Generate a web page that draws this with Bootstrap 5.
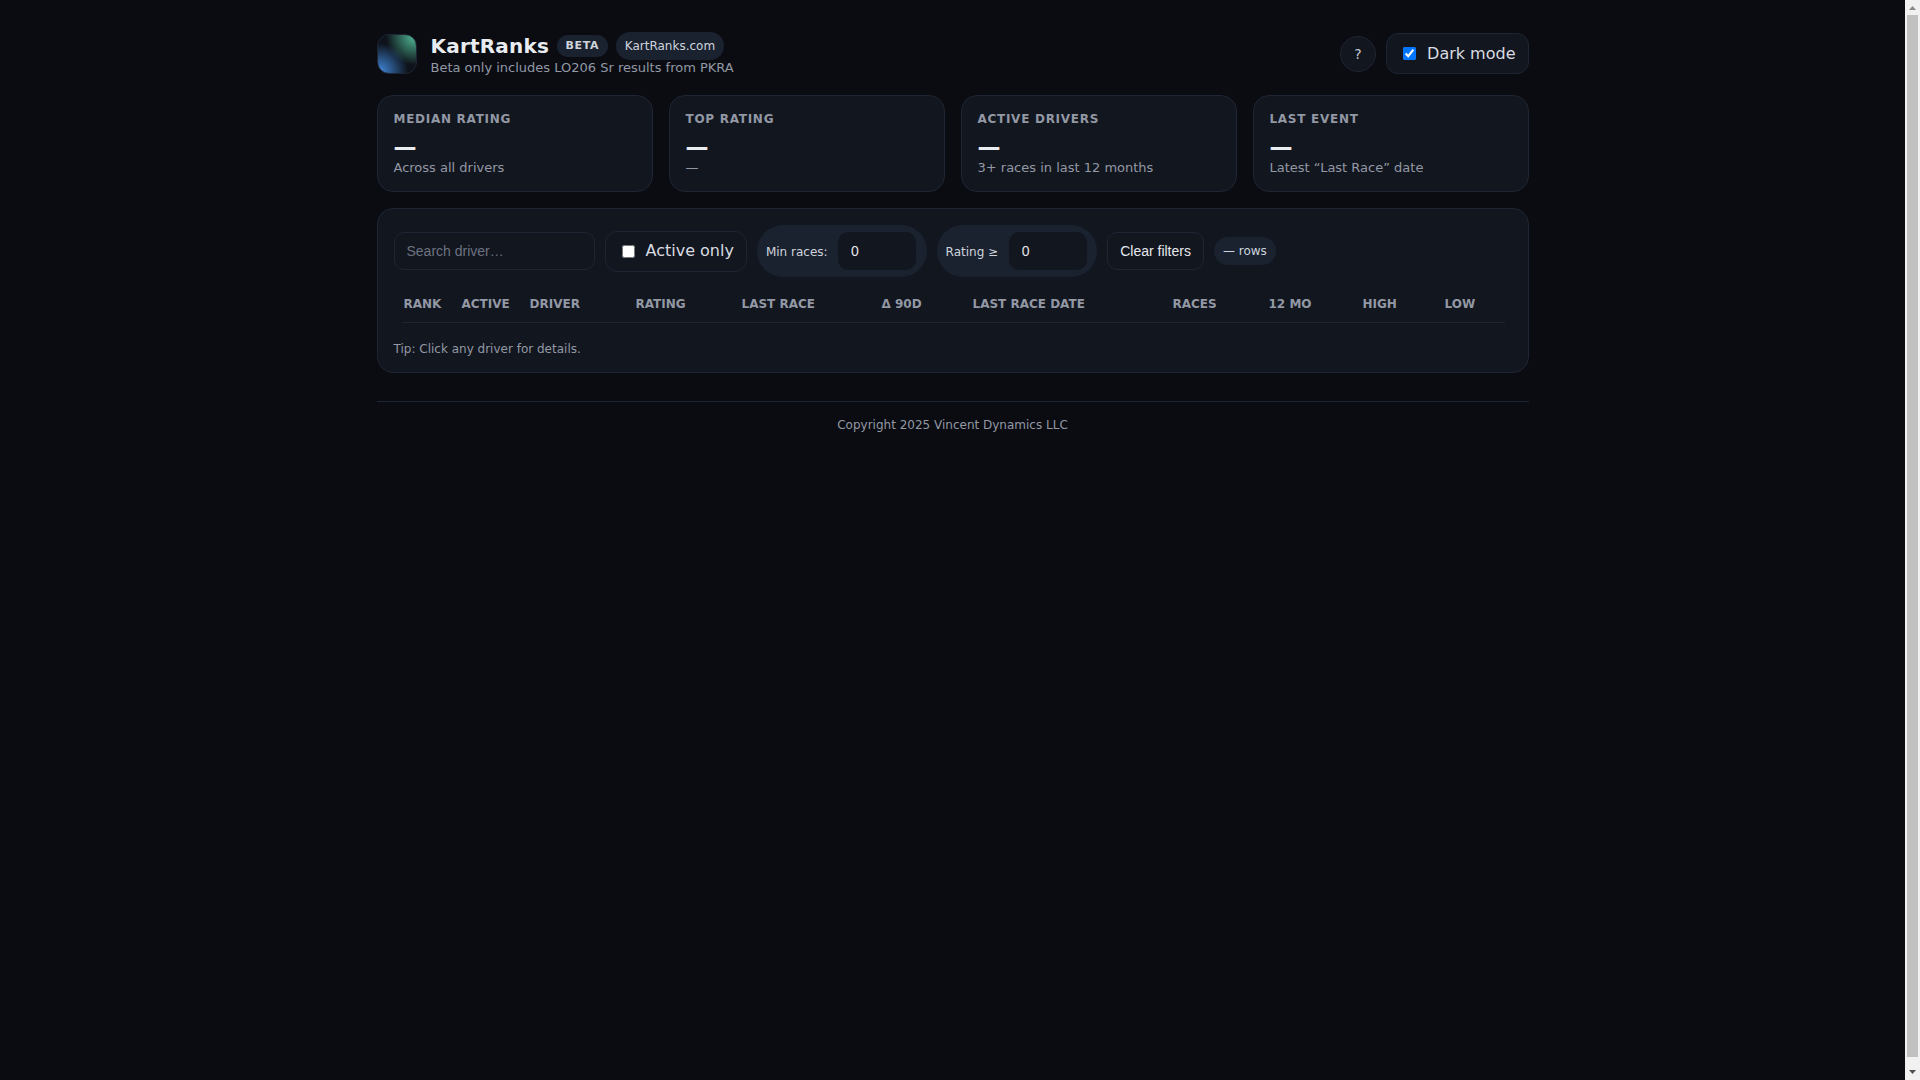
<!DOCTYPE html>
<html lang="en">
<head>
<meta charset="utf-8">
<title>KartRanks</title>
<link href="https://cdn.jsdelivr.net/npm/bootstrap@5.3.0/dist/css/bootstrap.min.css" rel="stylesheet">
<style>
html, body { height: 100%; overflow: hidden; }
body { background: #0a0c12; color: #e6e8ec; font-family: "DejaVu Sans", sans-serif; }
.kr-page { flex: 1 1 0; min-width: 0; }
.kr-sbar { width: 15px; flex: none; height: 100vh; background: #f1f1f1; }
.kr-sbar-btn { height: 15px; flex: none; }
.kr-sbar-btn svg { display: block; }
.kr-sbar-thumb { height: 1042px; margin: 0 2px; background: #c1c1c1; flex: none; }
.kr-sbar-rest { flex: 1 1 0; }
.kr-wrap { width: 1200px; margin: 0 auto; padding: 32px 24px 0; }
.kr-head { height: 43px; margin-bottom: 20px; }
.kr-logo { width: 40px; height: 40px; border-radius: 12px; border: 1px solid #1e2533; flex: none;
  background: radial-gradient(circle at 95% 5%, #4fb592 0, rgba(79,181,146,0) 55%), radial-gradient(circle at 5% 95%, #3f86d8 0, rgba(63,134,216,0) 55%), #0e121a; }
.kr-brand { margin-left: 14px; }
.kr-title { font-size: 20px; letter-spacing: .01em; font-weight: 700; line-height: 28px; color: #e9ecf0; }
.kr-beta { font-size: 11px; font-weight: 700; letter-spacing: .06em; height: 22px; line-height: 22px; padding: 0 8.5px; border-radius: 999px; background: #1a2230; color: #cfd4dc; margin-left: 8px; }
.kr-site { font-size: 12px; height: 28px; line-height: 28px; padding: 0 9px; border-radius: 999px; background: #1a2230; color: #cfd4dc; margin-left: 8px; }
.kr-sub { font-size: 13px; line-height: 15px; color: #9298a4; }
.kr-help { width: 36px; height: 36px; border-radius: 50%; border: 1px solid #1e2533; background: #12161f; color: #c6cad2; font-size: 14px; padding: 1px 0 0; }
.kr-check { height: 41px; border: 1px solid #1e2533; border-radius: 12px; background: #12161f; padding: 0 12px 0 16px; font-size: 16px; color: #d9dce2; margin: 0; gap: 11px; }
.kr-check input { margin: 0; width: 13px; height: 13px; }
.kr-gap { gap: 10px; }
.kr-stats { gap: 16px; margin-bottom: 16px; }
.kr-stat { flex: 1 1 0; height: 97px; background: #12161f; border: 1px solid #1e2533; border-radius: 16px; padding: 16px; }
.kr-stat-label { font-size: 12px; font-weight: 700; letter-spacing: .06em; line-height: 14px; color: #9298a4; }
.kr-stat-value { font-size: 23px; font-weight: 700; line-height: 26px; margin-top: 8px; color: #e9ecf0; }
.kr-stat-sub { font-size: 13px; line-height: 16px; margin-top: 0; color: #9298a4; }
.kr-main { height: 165px; background: #12161f; border: 1px solid #1e2533; border-radius: 16px; padding: 16px; }
.kr-tools { height: 52px; gap: 10px; }
.kr-search { width: 201px; height: 38px; border: 1px solid #1e2533; border-radius: 10px; background: #12161f; color: #e6e8ec; font-family: "Liberation Sans", sans-serif; font-size: 14px; padding: 0 12px; }
.kr-search::placeholder { color: #6c7280; opacity: 1; }
.kr-search:focus { background: #12161f; color: #e6e8ec; }
.kr-pill { height: 52px; border-radius: 26px; background: #1a2230; padding: 0 10.5px 0 9px; gap: 10.5px; font-size: 12px; color: #cfd4dc; }
.kr-pill-text { padding-top: 1px; }
.kr-num { width: 78px; height: 38px; border: 0; border-radius: 10px; background: #12161f; color: #e6e8ec; font-family: "Liberation Sans", sans-serif; font-size: 14px; padding: 0 13px; }
.kr-num:focus { background: #12161f; color: #e6e8ec; }
.kr-clear { height: 38px; border: 1px solid #1e2533; border-radius: 10px; background: #12161f; color: #e6e8ec; font-family: "Liberation Sans", sans-serif; font-size: 14px; padding: 0 12px; }
.kr-rows { height: 28px; line-height: 28px; padding: 0 9px; border-radius: 14px; background: #1a2230; font-size: 12px; color: #cfd4dc; margin-left: 0; }
.kr-table { width: 1103px; margin: 9px 8px 0; table-layout: fixed; border-collapse: collapse; }
.kr-table th { height: 36px; padding: 0 0 0 3px; font-size: 12px; font-weight: 700; letter-spacing: 0; text-transform: uppercase; color: #9298a4; background: transparent; border-bottom: 1px solid #1e2533; white-space: nowrap; }
.kr-table th:first-child { padding-left: 2px; }
.kr-tip { font-size: 12px; line-height: 14px; color: #9298a4; margin-top: 19px; }
.kr-foot { margin-top: 28px; border-top: 1px solid #1e2533; padding-top: 15px; text-align: center; font-size: 12px; line-height: 16px; color: #9298a4; }
</style>
</head>
<body class="d-flex">
<div class="kr-page">
<div class="kr-wrap">
  <header class="kr-head d-flex align-items-center justify-content-between">
    <div class="d-flex align-items-center">
      <div class="kr-logo"></div>
      <div class="kr-brand">
        <div class="d-flex align-items-center">
          <span class="kr-title">KartRanks</span>
          <span class="kr-beta">BETA</span>
          <span class="kr-site">KartRanks.com</span>
        </div>
        <div class="kr-sub">Beta only includes LO206 Sr results from PKRA</div>
      </div>
    </div>
    <div class="d-flex align-items-center kr-gap">
      <button type="button" class="btn kr-help">?</button>
      <label class="kr-check d-flex align-items-center"><input type="checkbox" checked>Dark mode</label>
    </div>
  </header>

  <section class="kr-stats d-flex">
    <div class="kr-stat">
      <div class="kr-stat-label">MEDIAN RATING</div>
      <div class="kr-stat-value">—</div>
      <div class="kr-stat-sub">Across all drivers</div>
    </div>
    <div class="kr-stat">
      <div class="kr-stat-label">TOP RATING</div>
      <div class="kr-stat-value">—</div>
      <div class="kr-stat-sub">—</div>
    </div>
    <div class="kr-stat">
      <div class="kr-stat-label">ACTIVE DRIVERS</div>
      <div class="kr-stat-value">—</div>
      <div class="kr-stat-sub">3+ races in last 12 months</div>
    </div>
    <div class="kr-stat">
      <div class="kr-stat-label">LAST EVENT</div>
      <div class="kr-stat-value">—</div>
      <div class="kr-stat-sub">Latest “Last Race” date</div>
    </div>
  </section>

  <section class="kr-main">
    <div class="kr-tools d-flex align-items-center">
      <input class="form-control kr-search" type="text" placeholder="Search driver…">
      <label class="kr-check d-flex align-items-center"><input type="checkbox">Active only</label>
      <div class="kr-pill d-flex align-items-center"><span class="kr-pill-text">Min races:</span><input class="form-control kr-num" type="number" value="0"></div>
      <div class="kr-pill d-flex align-items-center"><span class="kr-pill-text">Rating ≥</span><input class="form-control kr-num" type="number" value="0"></div>
      <button type="button" class="btn kr-clear">Clear filters</button>
      <span class="kr-rows">— rows</span>
    </div>
    <table class="kr-table">
      <colgroup>
        <col style="width:57px"><col style="width:68px"><col style="width:106px"><col style="width:106px"><col style="width:140px"><col style="width:91px"><col style="width:200px"><col style="width:96px"><col style="width:94px"><col style="width:82px"><col style="width:63px">
      </colgroup>
      <thead>
        <tr><th>Rank</th><th>Active</th><th>Driver</th><th>Rating</th><th>Last Race</th><th>Δ 90d</th><th>Last Race Date</th><th>Races</th><th>12 mo</th><th>High</th><th>Low</th></tr>
      </thead>
    </table>
    <div class="kr-tip">Tip: Click any driver for details.</div>
  </section>

  <footer class="kr-foot">Copyright 2025 Vincent Dynamics LLC</footer>
</div>
</div>
<aside class="kr-sbar d-flex flex-column" aria-hidden="true">
  <div class="kr-sbar-btn"><svg width="15" height="15" viewBox="0 0 15 15"><polygon points="4,10 7.5,6 11,10" fill="#8a8a8a"/></svg></div>
  <div class="kr-sbar-thumb"></div>
  <div class="kr-sbar-rest"></div>
  <div class="kr-sbar-btn"><svg width="15" height="15" viewBox="0 0 15 15"><polygon points="4,5 11,5 7.5,9" fill="#505050"/></svg></div>
</aside>
<script src="https://cdn.jsdelivr.net/npm/bootstrap@5.3.0/dist/js/bootstrap.bundle.min.js"></script>
</body>
</html>
